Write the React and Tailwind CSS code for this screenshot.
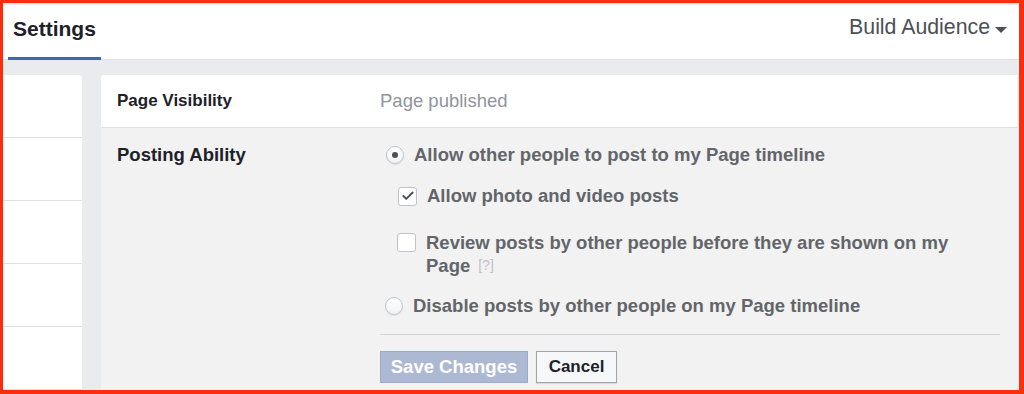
import { Check } from "lucide-react";

const font = { fontFamily: '"Liberation Sans", Arial, sans-serif' };

const Radio = ({ checked }) => (
  <span className="w-[18px] h-[18px] rounded-full border border-[#bec3c9] bg-gradient-to-b from-white to-[#f1f2f4] shadow-[0_1px_1px_rgba(0,0,0,0.08)] flex items-center justify-center shrink-0">
    {checked && <span className="w-[6px] h-[6px] rounded-full bg-[#4b4f56]" />}
  </span>
);

const Checkbox = ({ checked }) => (
  <span className="w-[19px] h-[19px] rounded-[3px] border border-[#bec3c9] bg-white flex items-center justify-center shrink-0">
    {checked && <Check size={14} strokeWidth={3.2} className="text-[#4b4f56]" />}
  </span>
);

const App = () => {
  const sideRows = [0, 1, 2, 3, 4];

  return (
    <div
      className="w-[1024px] h-[394px] overflow-hidden border-[#fb2d0f] border-t-[3px] border-l-[3px] border-r-[5px] border-b-[4px] bg-[#e9ebee] flex flex-col"
      style={font}
    >
      {/* Header */}
      <div className="h-[57px] bg-white border-b border-[#dddfe2] flex items-stretch justify-between shadow-[inset_0_3px_3px_-2px_rgba(0,0,0,0.18)] shrink-0">
        <div className="ml-[5px] px-[5px] border-b-[3px] border-[#4267b2] -mb-px flex items-center">
          <span className="text-[21px] font-bold text-[#1d2129] pb-[2px]">Settings</span>
        </div>
        <div className="flex items-center gap-[5px] pr-[12px] pb-[6px]">
          <span className="text-[21.3px] text-[#4b4f56]">Build Audience</span>
          <span className="w-0 h-0 border-l-[6px] border-r-[6px] border-t-[6px] border-l-transparent border-r-transparent border-t-[#4b4f56] mt-[3px]" />
        </div>
      </div>

      {/* Body */}
      <div className="flex-1 flex gap-[19px] pt-[15px] pr-[2px]">
        {/* Left nav column */}
        <div className="w-[79px] bg-white rounded-tr-[3px] flex flex-col">
          {sideRows.map((r) => (
            <div key={r} className="h-[63px] border-b border-[#dddfe2] shrink-0" />
          ))}
        </div>

        {/* Main card */}
        <div className="flex-1 bg-[#f2f2f2] rounded-tl-[3px] flex flex-col">
          <div className="h-[53px] bg-white border-b border-[#dddfe2] flex items-center pl-[16px] rounded-tl-[3px]">
            <span className="w-[263px] text-[17px] font-bold text-[#1d2129]">Page Visibility</span>
            <span className="text-[18.5px] text-[#90949c]">Page published</span>
          </div>

          <div className="flex pl-[16px] pt-[16px]">
            <div className="w-[263px] text-[18.5px] leading-[22px] font-bold text-[#1d2129]">
              Posting Ability
            </div>
            <div className="w-[620px] flex flex-col text-[18.5px] font-bold text-[#62656a]">
              <label className="flex items-center gap-[10px] pl-[6px] h-[22px]">
                <Radio checked />
                <span>Allow other people to post to my Page timeline</span>
              </label>
              <label className="flex items-center gap-[10px] pl-[18px] mt-[19px] h-[22px]">
                <Checkbox checked />
                <span>Allow photo and video posts</span>
              </label>
              <label className="flex items-start gap-[10px] pl-[17px] mt-[24px] leading-[23px]">
                <span className="mt-[2px]">
                  <Checkbox />
                </span>
                <div className="flex flex-col">
                  <span>Review posts by other people before they are shown on my</span>
                  <div className="flex items-center gap-[8px]">
                    <span>Page</span>
                    <span className="text-[14px] font-normal text-[#bec3c9]">[?]</span>
                  </div>
                </div>
              </label>
              <label className="flex items-center gap-[10px] pl-[5px] mt-[18px] h-[22px]">
                <Radio />
                <span>Disable posts by other people on my Page timeline</span>
              </label>
              <div className="mt-[17px] border-t border-[#d3d6db]" />
              <div className="flex gap-[8px] mt-[16px]">
                <button className="h-[32px] w-[148px] bg-[#adb9d3] border border-[#9cabca] text-white text-[18.5px] font-bold">
                  Save Changes
                </button>
                <button className="h-[32px] w-[81px] bg-[#f6f7f9] border border-[#a0a3a8] text-[#1d2129] text-[17px] font-bold shadow-[0_1px_1px_rgba(0,0,0,0.1)]">
                  Cancel
                </button>
              </div>
            </div>
          </div>
        </div>
      </div>
    </div>
  );
};

export default App;
